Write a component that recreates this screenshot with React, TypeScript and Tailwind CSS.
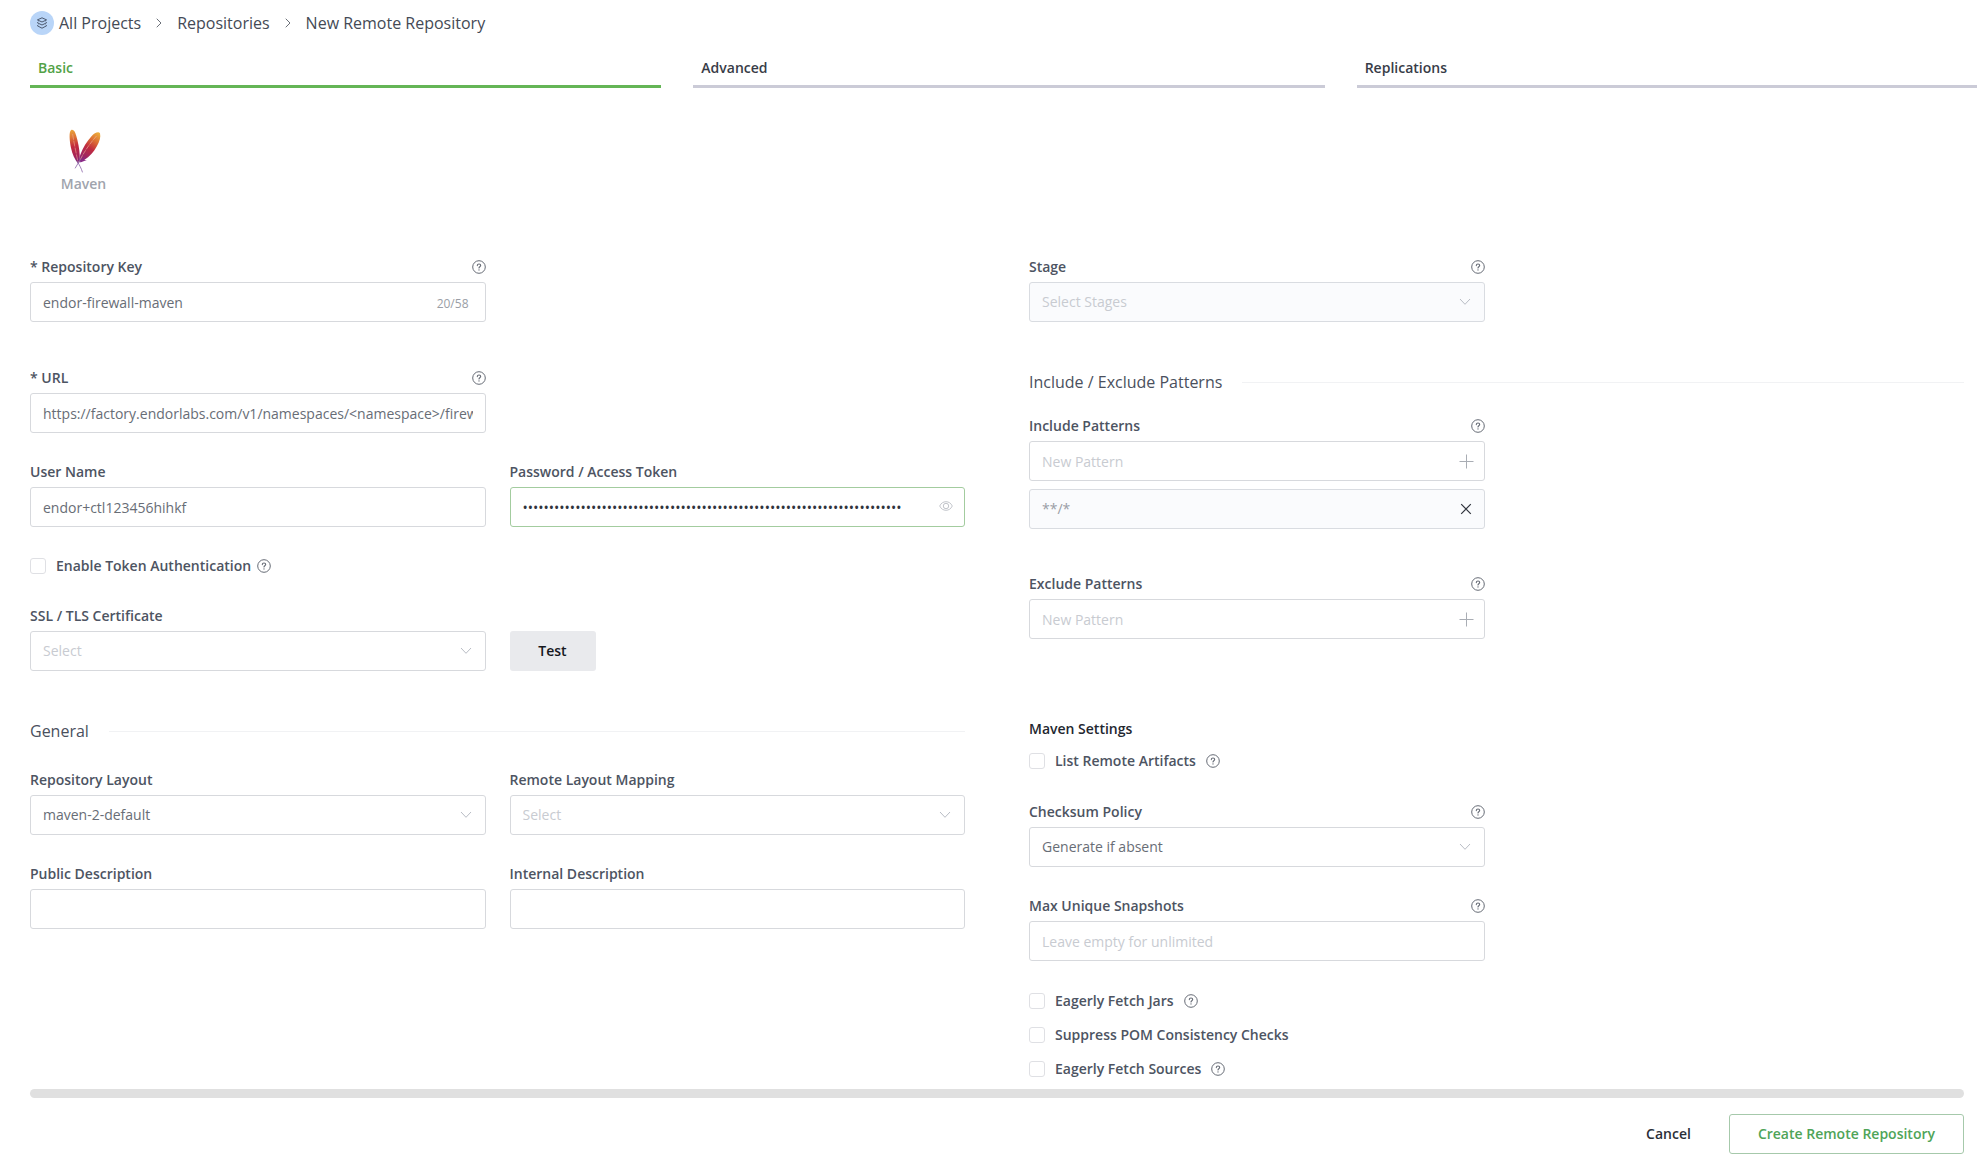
import { useId } from "react";
import type { ReactNode } from "react";
import { ChevronRight } from "lucide-react";

function HelpIcon() {
  return (
    <svg viewBox="0 0 14 14" className="size-3.5 shrink-0 text-[#666b75]" fill="none" stroke="currentColor" aria-hidden="true">
      <circle cx="7" cy="7" r="6.3" strokeWidth="1" />
      <path d="M5.300 5.600C5.300 4.600 6 4 7 4s1.700.6 1.700 1.500c0 1.200-1.700 1.300-1.700 2.500" strokeWidth="1.100" strokeLinecap="round" />
      <circle cx="7" cy="9.900" r=".7" fill="currentColor" stroke="none" />
    </svg>
  );
}

function Chevron() {
  return (
    <svg viewBox="0 0 12 8" className="pointer-events-none absolute top-4 right-3.5 h-2 w-3 text-[#b9bdc5]" fill="none" stroke="currentColor" aria-hidden="true">
      <path d="M1 1l5 5.300L11 1" strokeWidth="1" />
    </svg>
  );
}

function LayersIcon() {
  return (
    <svg viewBox="0 0 12 12" className="size-3" fill="none" stroke="#4c5a70" strokeWidth="1" strokeLinejoin="round" aria-hidden="true">
      <path d="M6 .8l4.600 2.100L6 5 1.400 2.900z" />
      <path d="M2.400 4.700l-1 1.100L6 8l4.600-2.200-1-1.100" />
      <path d="M2.400 7.700l-1 1.100L6 11.200l4.600-2.400-1-1.100" />
    </svg>
  );
}

function MavenLogo() {
  return (
    <svg viewBox="-1 0 34 44" className="h-11 w-[34px]" aria-hidden="true">
      <defs>
        <linearGradient id="featherLeft" x1="4" y1="1" x2="11" y2="34" gradientUnits="userSpaceOnUse">
          <stop offset="0" stopColor="#e9a43c" />
          <stop offset=".22" stopColor="#dd7434" />
          <stop offset=".48" stopColor="#c22b3c" />
          <stop offset=".8" stopColor="#a3235a" />
          <stop offset="1" stopColor="#6f2c8d" />
        </linearGradient>
        <linearGradient id="featherRight" x1="30" y1="4" x2="11" y2="33" gradientUnits="userSpaceOnUse">
          <stop offset="0" stopColor="#ecab3c" />
          <stop offset=".25" stopColor="#dc6d34" />
          <stop offset=".5" stopColor="#c02b3f" />
          <stop offset=".82" stopColor="#98256a" />
          <stop offset="1" stopColor="#6b2d90" />
        </linearGradient>
      </defs>
      <path d="M32 4.200C33 8 31.500 12.500 28.700 17.500c-3 5.300-7 10.500-12.500 13.500L11 33.500c0-3 .4-5.500 1.600-8.500C15 18.500 19 12 23.500 7.200 26.500 4 30.300 2.200 32 4.200z" fill="url(#featherRight)" />
      <path d="M3.200 1C5.500.2 7 2.500 8.300 7c1.700 5.800 3.200 13 3.400 19 .1 3-.3 6-1.700 8.500C6.800 30.500 4.200 25 2.900 18.500 1.700 12.500.600 2.500 3.200 1z" fill="url(#featherLeft)" />
      <path d="M28.500 7C21.500 15 15 24 10.500 34.500" fill="none" stroke="#f0b59d" strokeWidth=".6" strokeDasharray="5 1" />
      <path d="M4.600 5c1.500 9.500 3.500 19 5.600 29" fill="none" stroke="#eeaa92" strokeWidth=".6" strokeDasharray="6 1" />
      <path d="M12.300 33.500l6.500-2.600-4 .2 3.500-3.600-5.500 3z" fill="#8a2a86" />
      <path d="M12 31L7.300 39M9.600 33c1.800 3 3.600 6 4.800 10" fill="none" stroke="#8a63a8" strokeWidth=".8" strokeLinecap="round" />
    </svg>
  );
}

const box = "block h-10 w-full rounded-[3px] border px-3 text-sm leading-5 outline-none placeholder:text-[#c8cbd1]";
const plainBox = `${box} border-[#d7d9dd] bg-white text-[#686d76]`;
const mutedBox = `${box} border-[#d9dce1] bg-[#fafbfd] text-[#999da5]`;

function Field({ label, help, children }: { label: string; help?: boolean; children: (id: string) => ReactNode }) {
  const id = useId();
  return (
    <div>
      <div className="mb-1 flex items-center justify-between">
        <label htmlFor={id} className="text-sm leading-[22px] font-semibold text-[#4d5462]">
          {label}
        </label>
        {help && <HelpIcon />}
      </div>
      <div className="relative">{children(id)}</div>
    </div>
  );
}

function SelectField({ label, help, value, placeholder, disabled }: { label: string; help?: boolean; value?: string; placeholder?: string; disabled?: boolean }) {
  return (
    <Field label={label} help={help}>
      {(id) => (
        <>
          <select
            id={id}
            disabled={disabled}
            className={`appearance-none opacity-100 ${disabled ? mutedBox : plainBox} ${value ? "" : "text-[#c8cbd1]!"}`}
          >
            <option>{value ?? placeholder}</option>
          </select>
          <Chevron />
        </>
      )}
    </Field>
  );
}

function TextField({ label, help, value, placeholder }: { label: string; help?: boolean; value?: string; placeholder?: string }) {
  return (
    <Field label={label} help={help}>
      {(id) => <input id={id} type="text" defaultValue={value} placeholder={placeholder} className={plainBox} />}
    </Field>
  );
}

function PatternField({ label }: { label: string }) {
  return (
    <Field label={label} help>
      {(id) => (
        <>
          <input id={id} type="text" placeholder="New Pattern" className={plainBox} />
          <button type="button" aria-label="Add pattern" className="absolute top-3 right-[11px] text-[#a9adb4]">
            <svg viewBox="0 0 16 16" className="size-4" fill="none" stroke="currentColor" aria-hidden="true">
              <path d="M8.500 1.500v14M1.500 8.500h14" />
            </svg>
          </button>
        </>
      )}
    </Field>
  );
}

function CheckRow({ label, help, tight }: { label: string; help?: boolean; tight?: boolean }) {
  return (
    <div className={`flex items-center ${tight ? "gap-1.5" : "gap-2.5"}`}>
      <label className="flex items-center gap-2.5 text-sm leading-5 font-semibold text-[#4d5462]">
        <input type="checkbox" className="size-4 appearance-none rounded-[3px] border border-[#dfe0e4] bg-white" />
        {label}
      </label>
      {help && <HelpIcon />}
    </div>
  );
}

function SectionTitle({ children }: { children: ReactNode }) {
  return (
    <div className="flex items-center gap-5">
      <h2 className="text-base leading-[22px] text-[#4a505d]">{children}</h2>
      <div className="h-px flex-1 bg-[#f1f2f4]" />
    </div>
  );
}

export default function App() {
  const tabs = ["Basic", "Advanced", "Replications"];
  return (
    <div className="min-h-screen overflow-hidden bg-white pr-[13px] pl-[30px] font-['Open_Sans',sans-serif]">
      <nav aria-label="Breadcrumb" className="mt-[11px] flex h-6 items-center text-base text-[#444a55]">
        <a href="#projects" className="flex items-center gap-[5px]">
          <span className="flex size-6 items-center justify-center rounded-full bg-[#b9d5f8]">
            <LayersIcon />
          </span>
          All Projects
        </a>
        <ChevronRight className="mx-2.5 size-4 text-[#6b7078]" strokeWidth={1.5} />
        <a href="#repositories">Repositories</a>
        <ChevronRight className="mx-2.5 size-4 text-[#6b7078]" strokeWidth={1.5} />
        <span aria-current="page">New Remote Repository</span>
      </nav>

      <div role="tablist" className="mt-[22px] -mr-6 grid grid-cols-3 gap-8">
        {tabs.map((tab, i) => (
          <button
            key={tab}
            type="button"
            role="tab"
            aria-selected={i === 0}
            className={`h-[31px] border-b-[3px] px-2 pb-1.5 text-left text-sm leading-5 font-semibold ${
              i === 0 ? "border-[#64b556] text-[#52a247]" : "border-[#cbcbd7] text-[#383c47]"
            }`}
          >
            {tab}
          </button>
        ))}
      </div>

      <div className="mt-[41px] flex w-[107px] flex-col items-center gap-px">
        <MavenLogo />
        <span className="text-sm leading-5 font-semibold text-[#a0a4ad]">Maven</span>
      </div>

      <form>
        <div className="mt-[62px] grid grid-cols-2 gap-16">
          <section>
            <div className="grid grid-cols-2 gap-x-6">
              <Field label="* Repository Key" help>
                {(id) => (
                  <>
                    <input id={id} type="text" defaultValue="endor-firewall-maven" className={plainBox} />
                    <span className="absolute top-3 right-[17px] text-xs leading-5 text-[#9a9ea6]">20/58</span>
                  </>
                )}
              </Field>
              <div className="col-start-1 mt-[45px]">
                <TextField label="* URL" help value="https://factory.endorlabs.com/v1/namespaces/<namespace>/firewall/maven" />
              </div>
            </div>
            <div className="mt-7 grid grid-cols-2 gap-x-6">
              <TextField label="User Name" value="endor+ctl123456hihkf" />
              <Field label="Password / Access Token">
                {(id) => (
                  <>
                    <input
                      id={id}
                      type="password"
                      defaultValue={"x".repeat(72)}
                      className={`${box} border-[#a3cc9f] bg-white pr-10 text-[#30343d]`}
                    />
                    <button type="button" aria-label="Show password" className="absolute top-3.5 right-3 text-[#c2c5cb]">
                      <svg viewBox="0 0 14 10" className="h-2.5 w-3.5" fill="none" stroke="currentColor" aria-hidden="true">
                        <path d="M.7 5C2 2.200 4.300.700 7 .700S12 2.200 13.300 5C12 7.800 9.700 9.300 7 9.300S2 7.800.700 5z" />
                        <circle cx="7" cy="5" r="2.700" />
                      </svg>
                    </button>
                  </>
                )}
              </Field>
            </div>
            <div className="mt-[29px]">
              <CheckRow label="Enable Token Authentication" help tight />
            </div>
            <div className="mt-[29px] grid grid-cols-2 items-end gap-x-6">
              <SelectField label="SSL / TLS Certificate" placeholder="Select" />
              <button type="button" className="h-10 w-[86px] rounded-[3px] bg-[#e9eaed] text-sm font-semibold text-[#16181d]">
                Test
              </button>
            </div>
            <div className="mt-[49px]">
              <SectionTitle>General</SectionTitle>
            </div>
            <div className="mt-[27px] grid grid-cols-2 gap-x-6 gap-y-7">
              <SelectField label="Repository Layout" value="maven-2-default" />
              <SelectField label="Remote Layout Mapping" placeholder="Select" />
              <TextField label="Public Description" />
              <TextField label="Internal Description" />
            </div>
          </section>

          <section>
            <div className="grid grid-cols-2 gap-x-6">
              <SelectField label="Stage" help placeholder="Select Stages" disabled />
            </div>
            <div className="mt-[49px]">
              <SectionTitle>Include / Exclude Patterns</SectionTitle>
            </div>
            <div className="mt-[22px] grid grid-cols-2 gap-x-6">
              <div>
                <PatternField label="Include Patterns" />
                <div className={`${mutedBox} mt-2 flex! items-center justify-between`}>
                  <span>**/*</span>
                  <button type="button" aria-label="Remove pattern" className="text-[#30343d]">
                    <svg viewBox="0 0 12 12" className="size-3" fill="none" stroke="currentColor" strokeWidth="1.200" aria-hidden="true">
                      <path d="M1.200 1.200l9.600 9.600M10.800 1.200l-9.600 9.600" />
                    </svg>
                  </button>
                </div>
                <div className="mt-11">
                  <PatternField label="Exclude Patterns" />
                </div>
                <h3 className="mt-20 text-sm leading-5 font-semibold text-[#23272f]">Maven Settings</h3>
                <div className="mt-3">
                  <CheckRow label="List Remote Artifacts" help />
                </div>
                <div className="mt-[30px] flex flex-col gap-7">
                  <SelectField label="Checksum Policy" help value="Generate if absent" />
                  <TextField label="Max Unique Snapshots" help placeholder="Leave empty for unlimited" />
                </div>
                <div className="mt-[30px] flex flex-col gap-3.5">
                  <CheckRow label="Eagerly Fetch Jars" help />
                  <CheckRow label="Suppress POM Consistency Checks" />
                  <CheckRow label="Eagerly Fetch Sources" help />
                </div>
              </div>
            </div>
          </section>
        </div>

        <div className="mt-2.5 h-[9px] rounded-full bg-[#e0e0e0]" />

        <div className="mt-4 flex justify-end gap-4">
          <button type="button" className="h-10 px-[22px] text-sm font-semibold text-[#2b2f38]">
            Cancel
          </button>
          <button type="submit" className="h-10 rounded-[3px] border border-[#a6c9ab] px-7 text-sm font-semibold text-[#4fa458]">
            Create Remote Repository
          </button>
        </div>
      </form>
    </div>
  );
}
